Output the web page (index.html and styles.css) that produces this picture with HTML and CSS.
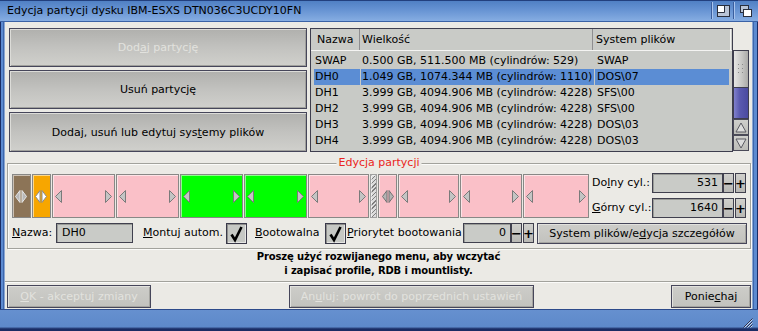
FILE: index.html
```html
<!DOCTYPE html>
<html lang="pl">
<head>
<meta charset="utf-8">
<title>Edycja partycji</title>
<link rel="stylesheet" href="styles.css">
</head>
<body>
<div class="win">
  <div class="titlebar">
    <span class="title">Edycja partycji dysku IBM-ESXS DTN036C3UCDY10FN</span>
    <span class="tsep"></span>
    <svg class="gad1" width="13" height="12" viewBox="0 0 13 12"><rect x="0.5" y="0.5" width="12" height="11" fill="#b9c4d6" stroke="#2a2f3c"/><rect x="1" y="1" width="6" height="6" fill="#fff"/><path d="M7.5 1 V7.5 H1" fill="none" stroke="#2a2f3c"/></svg>
    <span class="tsep s2"></span>
    <svg class="gad2" width="12" height="12" viewBox="0 0 12 12"><rect x="0.5" y="0.5" width="8" height="7" fill="#b9c4d6" stroke="#2a2f3c"/><rect x="3.5" y="4.5" width="8" height="7" fill="#fff" stroke="#2a2f3c"/></svg>
  </div>
  <div class="mid">
    <div class="bl"></div>
    <div class="content">
      <div class="top">
        <div class="btncol">
          <div class="bigbtn dis">Dod<u>a</u>j partycję</div>
          <div class="bigbtn">Usuń partycję</div>
          <div class="bigbtn b3">Dodaj, usuń lub edytuj sys<u>t</u>emy plików</div>
        </div>
        <div class="list">
          <div class="lhead">
            <div class="h1">Nazwa</div>
            <div class="h2">Wielkość</div>
            <div class="h3">System plików</div>
          </div>
          <div class="lrows">
            <div class="row"><div class="c1">SWAP</div><div class="c2">0.500 GB, 511.500 MB (cylindrów: 529)</div><div class="c3">SWAP</div></div>
            <div class="row sel"><div class="c1">DH0</div><div class="c2">1.049 GB, 1074.344 MB (cylindrów: 1110)</div><div class="c3">DOS\07</div></div>
            <div class="row"><div class="c1">DH1</div><div class="c2">3.999 GB, 4094.906 MB (cylindrów: 4228)</div><div class="c3">SFS\00</div></div>
            <div class="row"><div class="c1">DH2</div><div class="c2">3.999 GB, 4094.906 MB (cylindrów: 4228)</div><div class="c3">SFS\00</div></div>
            <div class="row"><div class="c1">DH3</div><div class="c2">3.999 GB, 4094.906 MB (cylindrów: 4228)</div><div class="c3">DOS\03</div></div>
            <div class="row"><div class="c1">DH4</div><div class="c2">3.999 GB, 4094.906 MB (cylindrów: 4228)</div><div class="c3">DOS\03</div></div>
          </div>
        </div>
        <div class="scroll">
          <div class="track">
            <div class="knob"><svg width="6" height="9" viewBox="0 0 6 9"><g fill="#8a8a8a"><rect x="0" y="0" width="1" height="1"/><rect x="4" y="0" width="1" height="1"/><rect x="0" y="4" width="1" height="1"/><rect x="4" y="4" width="1" height="1"/><rect x="0" y="8" width="1" height="1"/><rect x="4" y="8" width="1" height="1"/></g></svg></div>
            <div class="rest"></div>
          </div>
          <div class="arr"><svg width="12" height="11" viewBox="0 0 12 11"><polygon points="6,1 11,10 1,10" fill="#dcdcdc" stroke="#5a5a62"/></svg></div>
          <div class="arr"><svg width="12" height="11" viewBox="0 0 12 11"><polygon points="1,1 11,1 6,10" fill="#dcdcdc" stroke="#5a5a62"/></svg></div>
        </div>
      </div>

      <div class="group">
        <span class="legend">Edycja partycji</span>
        <div class="grow1">
          <div class="bar">
            <div class="seg brown" style="width:19px"><svg class="dia" width="12" height="13" viewBox="0 0 12 13"><polygon points="5,0.5 0.5,6.5 5,12.5" fill="#b8b8b8" stroke="#e6e6e6"/><polygon points="7,0.5 11.5,6.5 7,12.5" fill="#b8b8b8" stroke="#e6e6e6"/></svg></div>
            <div class="seg orange" style="width:19px"><svg class="dia" width="12" height="13" viewBox="0 0 12 13"><polygon points="5,0.5 0.5,6.5 5,12.5" fill="#fff" stroke="#8a8a8a"/><polygon points="7,0.5 11.5,6.5 7,12.5" fill="#fff" stroke="#8a8a8a"/></svg></div>
            <div class="seg pink" style="width:63px"><svg width="7" height="13" viewBox="0 0 7 13"><polygon points="6.5,0.5 0.5,6.5 6.5,12.5" fill="#c4c4c4" stroke="#7a7a7a"/></svg><svg width="7" height="13" viewBox="0 0 7 13"><polygon points="0.5,0.5 6.5,6.5 0.5,12.5" fill="#c4c4c4" stroke="#7a7a7a"/></svg></div>
            <div class="seg pink" style="width:63px"><svg width="7" height="13" viewBox="0 0 7 13"><polygon points="6.5,0.5 0.5,6.5 6.5,12.5" fill="#c4c4c4" stroke="#7a7a7a"/></svg><svg width="7" height="13" viewBox="0 0 7 13"><polygon points="0.5,0.5 6.5,6.5 0.5,12.5" fill="#c4c4c4" stroke="#7a7a7a"/></svg></div>
            <div class="seg green" style="width:63px"><svg width="7" height="13" viewBox="0 0 7 13"><polygon points="6.5,0.5 0.5,6.5 6.5,12.5" fill="#c4c4c4" stroke="#7a7a7a"/></svg><svg width="7" height="13" viewBox="0 0 7 13"><polygon points="0.5,0.5 6.5,6.5 0.5,12.5" fill="#c4c4c4" stroke="#7a7a7a"/></svg></div>
            <div class="seg green" style="width:63px"><svg width="7" height="13" viewBox="0 0 7 13"><polygon points="6.5,0.5 0.5,6.5 6.5,12.5" fill="#c4c4c4" stroke="#7a7a7a"/></svg><svg width="7" height="13" viewBox="0 0 7 13"><polygon points="0.5,0.5 6.5,6.5 0.5,12.5" fill="#c4c4c4" stroke="#7a7a7a"/></svg></div>
            <div class="seg pink" style="width:62px"><svg width="7" height="13" viewBox="0 0 7 13"><polygon points="6.5,0.5 0.5,6.5 6.5,12.5" fill="#c4c4c4" stroke="#7a7a7a"/></svg><svg width="7" height="13" viewBox="0 0 7 13"><polygon points="0.5,0.5 6.5,6.5 0.5,12.5" fill="#c4c4c4" stroke="#7a7a7a"/></svg></div>
            <div class="seg hatch" style="width:7px"></div>
            <div class="seg pink" style="width:19px"><svg class="dia" width="12" height="13" viewBox="0 0 12 13"><polygon points="5,0.5 0.5,6.5 5,12.5" fill="#b4b4b4" stroke="#707070"/><polygon points="7,0.5 11.5,6.5 7,12.5" fill="#b4b4b4" stroke="#707070"/></svg></div>
            <div class="seg pink" style="width:61px"><svg width="7" height="13" viewBox="0 0 7 13"><polygon points="6.5,0.5 0.5,6.5 6.5,12.5" fill="#c4c4c4" stroke="#7a7a7a"/></svg><svg width="7" height="13" viewBox="0 0 7 13"><polygon points="0.5,0.5 6.5,6.5 0.5,12.5" fill="#c4c4c4" stroke="#7a7a7a"/></svg></div>
            <div class="seg pink" style="width:62px"><svg width="7" height="13" viewBox="0 0 7 13"><polygon points="6.5,0.5 0.5,6.5 6.5,12.5" fill="#c4c4c4" stroke="#7a7a7a"/></svg><svg width="7" height="13" viewBox="0 0 7 13"><polygon points="0.5,0.5 6.5,6.5 0.5,12.5" fill="#c4c4c4" stroke="#7a7a7a"/></svg></div>
            <div class="seg pink" style="width:66px"><svg width="7" height="13" viewBox="0 0 7 13"><polygon points="6.5,0.5 0.5,6.5 6.5,12.5" fill="#c4c4c4" stroke="#7a7a7a"/></svg><svg width="7" height="13" viewBox="0 0 7 13"><polygon points="0.5,0.5 6.5,6.5 0.5,12.5" fill="#c4c4c4" stroke="#7a7a7a"/></svg></div>
          </div>
          <div class="cyl">
            <div class="crow">
              <span class="clabel">Do<u>l</u>ny cyl.:</span>
              <span class="field num w71">531</span>
              <span class="spin">−</span><span class="spin plus">+</span>
            </div>
            <div class="crow">
              <span class="clabel"><u>G</u>órny cyl.:</span>
              <span class="field num w71">1640</span>
              <span class="spin">−</span><span class="spin plus">+</span>
            </div>
          </div>
        </div>
        <div class="grow2">
          <span class="lab l-nazwa"><u>N</u>azwa:</span>
          <span class="field w77">DH0</span>
          <span class="lab l-montuj"><u>M</u>ontuj autom.</span>
          <span class="check"><svg width="19" height="19" viewBox="0 0 19 19"><path d="M4.5 10.5 L8 16 L14.5 3" fill="none" stroke="#000" stroke-width="2.6"/></svg></span>
          <span class="lab l-boot"><u>B</u>ootowalna</span>
          <span class="check"><svg width="19" height="19" viewBox="0 0 19 19"><path d="M4.5 10.5 L8 16 L14.5 3" fill="none" stroke="#000" stroke-width="2.6"/></svg></span>
          <span class="lab l-prio"><u>P</u>riorytet bootowania</span>
          <span class="field num w48">0</span>
          <span class="spin">−</span><span class="spin plus">+</span>
          <span class="btn fsbtn">System plików/e<u>d</u>ycja szczegółów</span>
        </div>
      </div>

      <div class="msg">Proszę użyć rozwijanego menu, aby wczytać<br>i zapisać profile, RDB i mountlisty.</div>

      <div class="actions">
        <span class="btn dis okbtn"><u>O</u>K - akceptuj zmiany</span>
        <span class="btn dis anbtn">An<u>u</u>luj: powrót do poprzednich ustawień</span>
        <span class="btn pnbtn">Ponie<u>c</u>haj</span>
      </div>
    </div>
    <div class="br"></div>
  </div>
  <div class="bottombar">
    <svg class="grip" width="10" height="10" viewBox="0 0 10 10"><g stroke="#2a3050" stroke-width="1"><line x1="9.5" y1="0.5" x2="0.5" y2="9.5"/><line x1="9.5" y1="3.5" x2="3.5" y2="9.5"/><line x1="9.5" y1="6.5" x2="6.5" y2="9.5"/></g><g stroke="#c8d8f0" stroke-width="1"><line x1="9.5" y1="1.5" x2="1.5" y2="9.5"/><line x1="9.5" y1="4.5" x2="4.5" y2="9.5"/><line x1="9.5" y1="7.5" x2="7.5" y2="9.5"/></g></svg>
  </div>
</div>
</body>
</html>
```

FILE: styles.css
```css
* { box-sizing: border-box; }
html, body { margin: 0; padding: 0; }
body {
  width: 758px;
  height: 331px;
  overflow: hidden;
  font-family: "DejaVu Sans", "Noto Sans", sans-serif;
  font-size: 11px;
  color: #000;
  background: #1e3470;
}
u { text-decoration: underline; text-underline-offset: 1px; }

.win { width: 758px; height: 331px; display: flex; flex-direction: column; }

/* title bar */
.titlebar {
  height: 22px;
  display: flex;
  align-items: center;
  padding: 0 6px 0 7px;
  background: linear-gradient(#22407e 0, #22407e 1px, #5080c4 1px, #6592d2 45%, #86ade2 100%);
  border-bottom: 1px solid #3a62a6;
}
.title { flex: 1; white-space: nowrap; }
.tsep {
  width: 2px;
  height: 17px;
  border-left: 1px solid #3a5e9e;
  border-right: 1px solid #a9c5ee;
  margin-right: 4px;
}
.tsep.s2 { margin-left: 3px; margin-right: 5px; }
.gad1, .gad2 { display: block; }

/* middle */
.mid { flex: 1; display: flex; min-height: 0; }
.bl {
  width: 5px;
  background: linear-gradient(90deg, #1a2c64 0 1px, #5c8ad0 1px 3px, #3d67ad 3px 4px, #8aa6d2 4px);
}
.br {
  width: 6px;
  background: linear-gradient(90deg, #8aa6d2 0 1px, #3d67ad 1px 2px, #5c8ad0 2px 5px, #1a2c64 5px);
}
.content {
  width: 747px;
  background: #ebeae5;
  display: flex;
  flex-direction: column;
}

/* top area */
.top { display: flex; height: 124px; margin-top: 6px; padding-left: 4px; }
.btncol { width: 298px; display: flex; flex-direction: column; gap: 3px; }
.bigbtn {
  height: 39px;
  display: flex;
  align-items: center;
  justify-content: center;
  border: 1px solid #46465a;
  background: linear-gradient(#b0b0ad, #c2c2bf 50%, #d0d0cc);
  box-shadow: inset 1px 1px 0 #dcdcd8, inset -1px -1px 0 #a0a09c;
}
.bigbtn.b3 { height: 40px; }
.dis { color: #e2e2de; }

.list {
  width: 423px;
  margin-left: 3px;
  border: 1px solid #3e3e4e;
  background: #c8cac6;
}
.lhead {
  display: flex;
  height: 22px;
  border-bottom: 1px solid #f4f4f2;
  line-height: 21px;
  background: #c9cbc7;
}
.lhead div { height: 21px; }
.h1 { width: 49px; padding-left: 6px; border-right: 1px solid #8e8e90; }
.h2 { width: 233px; padding-left: 2px; border-right: 1px solid #8e8e90; }
.h3 { flex: 1; padding-left: 3px; border-right: 1px solid #f4f4f2; margin-right: 1px; }
.lrows { padding: 2px 0 0 3px; }
.row {
  display: grid;
  grid-template-columns: 46px 233px 134px;
  column-gap: 1px;
  height: 16px;
  line-height: 16px;
  white-space: nowrap;
}
.c1 { padding-left: 1px; }
.c2 { padding-left: 1px; }
.c3 { padding-left: 2px; }
.row.sel div { background: #5b8dd4; }

.scroll { width: 16px; padding-top: 22px; display: flex; flex-direction: column; }
.track {
  height: 69px;
  border: 1px solid #3e3e4e;
  display: flex;
  flex-direction: column;
}
.knob {
  height: 37px;
  background: linear-gradient(90deg, #e6e6e4, #c4c4c2 60%, #aaaaa8);
  border-bottom: 1px solid #3e3e4e;
  display: flex;
  align-items: center;
  justify-content: center;
}
.knob svg { display: block; margin-top: -2px; }
.rest { flex: 1; background: linear-gradient(90deg, #8080cc, #5a5ab0 40%, #4a4aa0); }
.arr {
  height: 16px;
  margin-top: 0;
  border: 1px solid #4a4a58;
  background: linear-gradient(#cfcfcc, #bcbcb8);
  display: flex;
  align-items: center;
  justify-content: center;
}
.arr:first-of-type { margin-top: 3px; }
.arr svg { display: block; }

/* group */
.group {
  position: relative;
  margin: 11px 0 0 2px;
  width: 744px;
  height: 87px;
  border: 1px solid #a2a29c;
  box-shadow: inset 1px 1px 0 #fbfbf9, 1px 1px 0 #fbfbf9;
  padding: 9px 0 0 4px;
}
.legend {
  position: absolute;
  top: -8px;
  left: 50%;
  transform: translateX(-50%);
  padding: 0 2px;
  line-height: 14px;
  background: #ebeae5;
  color: #ea2420;
  white-space: nowrap;
}
.grow1 { display: flex; height: 46px; }
.bar { display: flex; gap: 1px; height: 44px; margin-top: 1px; width: 577px; }
.seg {
  height: 44px;
  border: 1px solid #888886;
  box-shadow: inset 1px 1px 0 rgba(255,255,255,0.55);
  display: flex;
  align-items: center;
  justify-content: space-between;
  padding: 0 2px;
}
.seg svg { display: block; }
.seg .dia { margin: 0 auto; }
.brown { background: #8c7457; }
.orange { background: #f7a600; }
.pink { background: #fac0c8; }
.green { background: #00ff00; }
.hatch {
  border-color: #a0a0a0;
  background: repeating-linear-gradient(135deg, #7e7e7e 0 1px, #dcdcdc 1px 3px);
}

.cyl { margin-left: 3px; display: flex; flex-direction: column; gap: 5px; }
.crow { display: flex; height: 20px; align-items: stretch; }
.clabel { width: 60px; line-height: 20px; white-space: nowrap; }

.field {
  display: block;
  height: 20px;
  line-height: 18px;
  border: 1px solid #40404e;
  background: #c9cbc7;
  box-shadow: inset 1px 1px 0 #9a9c98;
  padding: 0 4px;
  white-space: nowrap;
}
.num { text-align: right; }
.w71 { width: 71px; }
.w77 { width: 77px; padding-left: 5px; }
.w48 { width: 48px; }
.spin {
  display: flex;
  align-items: center;
  justify-content: center;
  width: 11px;
  height: 20px;
  border: 1px solid #40404e;
  background: linear-gradient(#d0d0cc, #b8b8b4);
  font-weight: bold;
  font-size: 13px;
  line-height: 1;
}
.spin.plus { margin-left: 1px; }

.grow2 { display: flex; align-items: center; height: 22px; margin-top: 3px; }
.grow2 .field, .grow2 .spin { height: 20px; }
.lab { white-space: nowrap; line-height: 20px; }
.l-nazwa { width: 44px; }
.l-montuj { width: 83px; margin-left: 10px; }
.l-boot { width: 70px; margin-left: 8px; }
.l-prio { width: 116px; margin-left: 1px; }
.check {
  display: flex;
  align-items: center;
  justify-content: center;
  width: 21px;
  height: 21px;
  border: 1px solid #3a3a4a;
  background: #c6c8c4;
  box-shadow: inset 1px 1px 0 #8e8e8c, inset -1px -1px 0 #e6e6e4;
}
.check svg { display: block; }

.btn {
  display: flex;
  align-items: center;
  justify-content: center;
  border: 1px solid #46465a;
  background: linear-gradient(#cdcdc9, #c2c2be);
  box-shadow: inset 1px 1px 0 #e2e2de, inset -1px -1px 0 #a4a4a0;
  white-space: nowrap;
}
.fsbtn { width: 210px; height: 21px; margin-left: 3px; }

/* message */
.msg {
  height: 32px;
  padding-top: 1px;
  text-align: center;
  font-weight: bold;
  font-size: 10px;
  letter-spacing: -0.15px;
  line-height: 14px;
}

.actions {
  display: flex;
  border-top: 1px solid #a2a29c;
  box-shadow: inset 0 1px 0 #fbfbf9;
  padding-top: 3px;
  height: 28px;
}
.actions .btn { height: 23px; }
.okbtn { width: 144px; margin-left: 2px; }
.anbtn { width: 245px; margin-left: 138px; }
.pnbtn { width: 80px; margin-left: auto; margin-right: 1px; }

/* bottom bar */
.bottombar {
  height: 22px;
  background: linear-gradient(#6690cf, #5d89ca 80%, #1a2c64 90%);
  border-top: 1px solid #2c4a8a;
  display: flex;
  justify-content: flex-end;
  align-items: flex-end;
  padding: 0 5px 3px 0;
}
.grip { display: block; }
```
